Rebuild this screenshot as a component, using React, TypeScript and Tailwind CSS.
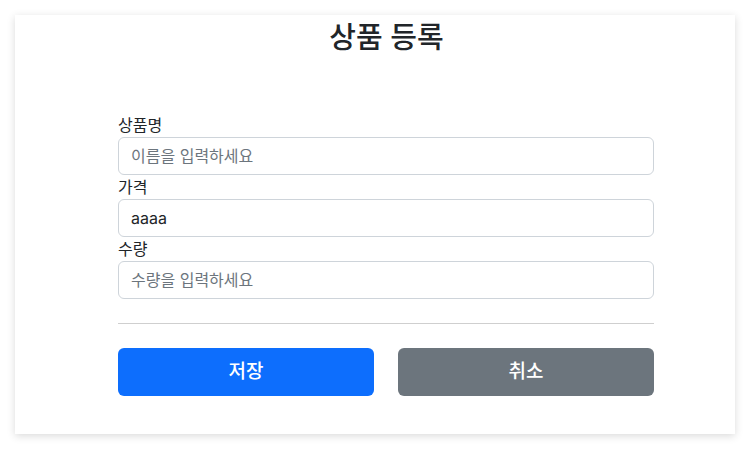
const App = () => {
  return (
    <div
      className="min-h-screen w-full bg-white pt-[15px] pl-[15px]"
      style={{ fontFamily: 'Inter, "Noto Sans CJK KR", sans-serif' }}
    >
      <div className="w-[720px] h-[419px] bg-white shadow-[0_2px_8px_rgba(0,0,0,0.15)] pl-[103px]">
        <div className="w-[536px] text-[#212529]">
          {/* Title */}
          <h2 className="text-[29px] leading-[38px] font-medium text-center pt-[4px] pl-[1px]">상품 등록</h2>

          {/* Form */}
          <div className="mt-[56px] flex flex-col">
            <label className="text-[16px] leading-[24px]">상품명</label>
            <input
              className="h-[38px] w-full border border-[#ced4da] rounded-[6px] px-3 text-[16px] placeholder:text-[#6c757d] outline-none"
              placeholder="이름을 입력하세요"
            />
            <label className="text-[16px] leading-[24px]">가격</label>
            <input
              className="h-[38px] w-full border border-[#ced4da] rounded-[6px] px-3 text-[16px] text-[#212529] outline-none"
              defaultValue="aaaa"
            />
            <label className="text-[16px] leading-[24px]">수량</label>
            <input
              className="h-[38px] w-full border border-[#ced4da] rounded-[6px] px-3 text-[16px] placeholder:text-[#6c757d] outline-none"
              placeholder="수량을 입력하세요"
            />
          </div>

          <hr className="mt-[24px] border-t border-[#cfcfcf]" />

          {/* Buttons */}
          <div className="mt-[24px] grid grid-cols-2 gap-6">
            <button className="h-12 rounded-[6px] bg-[#0d6efd] text-white text-[19px] font-medium">저장</button>
            <button className="h-12 rounded-[6px] bg-[#6c757d] text-white text-[19px] font-medium">취소</button>
          </div>
        </div>
      </div>
    </div>
  );
};

export default App;
